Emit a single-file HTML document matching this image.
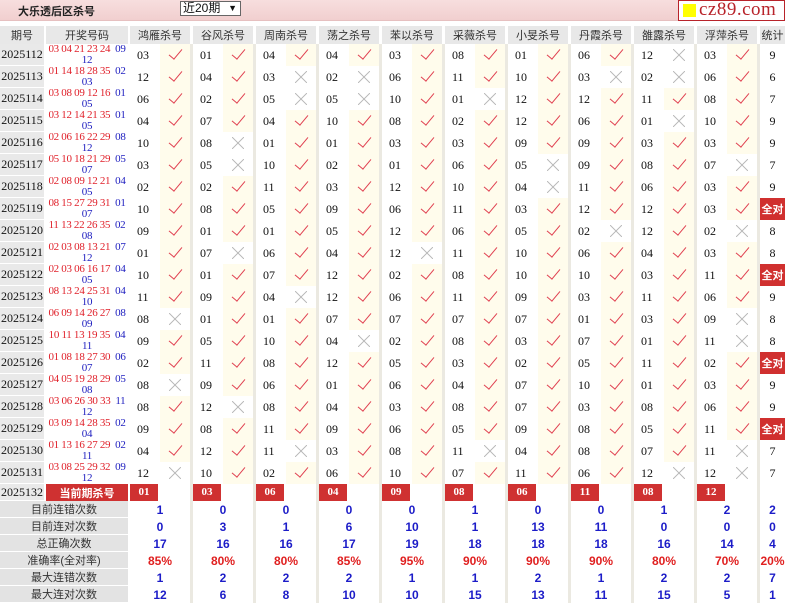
<!DOCTYPE html>
<html><head><meta charset="utf-8">
<style>
*{margin:0;padding:0}
body{width:785px;height:600px;overflow:hidden;background:#fff;font-family:"Liberation Serif","Noto Serif CJK SC",serif;font-size:12px;color:#111;position:relative}
.top{position:absolute;left:0;top:0;width:785px;height:20px;background:linear-gradient(180deg,#f7dede,#f1cfcf);border-bottom:1px solid #e6c0c0}
.title{position:absolute;left:18px;top:3px;font:bold 11px "Liberation Sans","Noto Sans CJK SC",sans-serif;color:#222}
.sel{position:absolute;left:180px;top:1px;width:57px;height:13px;border:1px solid #666;background:#fff;font:12px "Liberation Sans","Noto Sans CJK SC",sans-serif;line-height:13px;padding-left:2px;box-sizing:content-box}
.sel span{position:absolute;right:3px;top:0;font-size:9px}
.logo{position:absolute;left:678px;top:0;width:105px;height:19px;border:1px solid #b8232a;background:#fff}
.logo i{position:absolute;left:4px;top:3px;width:13px;height:13px;background:#ffff00}
.logo b{position:absolute;left:20px;top:-2px;font:19px "Liberation Serif",serif;color:#b8232a;letter-spacing:0.5px}
table{position:absolute;left:0;top:26px;border-collapse:separate;border-spacing:0;table-layout:fixed;width:785px}
td{box-sizing:border-box;padding:0;height:22px;text-align:center;vertical-align:middle;overflow:hidden;white-space:nowrap}
tr.h td{height:18px;background:#e8e8e8;font:11px "Liberation Sans","Noto Sans CJK SC",sans-serif;color:#333;border-right:2px solid #fff}
tr.h td.g{border-right:3px solid #fff}
td.q{background:#e9e9e9;border-right:2px solid #fff;border-bottom:1px solid #fff;font-size:12px}
td.k{border-right:2px solid #fff;line-height:11px;font-size:11px;letter-spacing:-0.3px;color:#2020c0;vertical-align:top;padding-top:0}
td.k span{color:#e0202a}
td.n{text-align:left;padding-left:7px}
td.v,td.x{border-right:3px solid #ebe9e1}
td.v{background:#fffcec}
td.v:after{content:"";display:inline-block;width:6px;height:12px;border:solid #e04050;border-width:0 1.6px 1.6px 0;transform:rotate(40deg);margin-top:-5px}
td.x{background:linear-gradient(45deg,transparent 46%,#bdbdbd 46%,#bdbdbd 54%,transparent 54%) center/12px 12px no-repeat,linear-gradient(-45deg,transparent 46%,#bdbdbd 46%,#bdbdbd 54%,transparent 54%) center/12px 12px no-repeat,#fff}
td.t{font-size:12px}
td.a{background:#d0302f;color:#fff;font:bold 11px "Liberation Sans","Noto Sans CJK SC",sans-serif}
tr.c td{height:17px}
tr.c td.cur{background:#cf3131;color:#fff;font:bold 11px "Liberation Sans","Noto Sans CJK SC",sans-serif;border-right:2px solid #fff}
tr.c td.n{padding:0}
tr.c td.n b{display:block;width:28px;height:17px;line-height:17px;background:#cf3131;color:#fff;font-size:11px;text-align:center}
tr.c td.e{border-right:3px solid #ebe9e1}
tr.s td{height:17px;font:bold 12px "Liberation Sans",sans-serif;color:#1c1cc8;border-right:3px solid #ebe9e1}
tr.s td.l{background:#e3e3e3;font:11px "Liberation Sans","Noto Sans CJK SC",sans-serif;color:#333;border-right:2px solid #fff;border-bottom:1px solid #fff}
tr.s td.z{border-right:0}
tr.p td{color:#e02020}
tr.p td.l{color:#333}
</style></head><body>
<div class="top"><div class="title">大乐透后区杀号</div><div class="sel">近20期<span>▼</span></div><div class="logo"><i></i><b>cz89.com</b></div></div>
<table>
<colgroup><col style="width:46px"><col style="width:84px">
<col style="width:30px"><col style="width:33px"><col style="width:30px"><col style="width:33px"><col style="width:30px"><col style="width:33px"><col style="width:30px"><col style="width:33px"><col style="width:30px"><col style="width:33px"><col style="width:30px"><col style="width:33px"><col style="width:30px"><col style="width:33px"><col style="width:30px"><col style="width:33px"><col style="width:30px"><col style="width:33px"><col style="width:30px"><col style="width:33px">
<col style="width:25px"></colgroup>
<tr class="h"><td>期号</td><td>开奖号码</td><td colspan="2" class="g">鸿雁杀号</td><td colspan="2" class="g">谷风杀号</td><td colspan="2" class="g">周南杀号</td><td colspan="2" class="g">荡之杀号</td><td colspan="2" class="g">苯以杀号</td><td colspan="2" class="g">采薇杀号</td><td colspan="2" class="g">小旻杀号</td><td colspan="2" class="g">丹霞杀号</td><td colspan="2" class="g">雒露杀号</td><td colspan="2" class="g">浮萍杀号</td><td style="border:0">统计</td></tr>
<tr><td class="q">2025112</td><td class="k"><span>03 04 21 23 24</span> &nbsp;09<br>12</td><td class="n">03</td><td class="v"></td><td class="n">01</td><td class="v"></td><td class="n">04</td><td class="v"></td><td class="n">04</td><td class="v"></td><td class="n">03</td><td class="v"></td><td class="n">08</td><td class="v"></td><td class="n">01</td><td class="v"></td><td class="n">06</td><td class="v"></td><td class="n">12</td><td class="x"></td><td class="n">03</td><td class="v"></td><td class="t">9</td></tr>
<tr><td class="q">2025113</td><td class="k"><span>01 14 18 28 35</span> &nbsp;02<br>03</td><td class="n">12</td><td class="v"></td><td class="n">04</td><td class="v"></td><td class="n">03</td><td class="x"></td><td class="n">02</td><td class="x"></td><td class="n">06</td><td class="v"></td><td class="n">11</td><td class="v"></td><td class="n">10</td><td class="v"></td><td class="n">03</td><td class="x"></td><td class="n">02</td><td class="x"></td><td class="n">06</td><td class="v"></td><td class="t">6</td></tr>
<tr><td class="q">2025114</td><td class="k"><span>03 08 09 12 16</span> &nbsp;01<br>05</td><td class="n">06</td><td class="v"></td><td class="n">02</td><td class="v"></td><td class="n">05</td><td class="x"></td><td class="n">05</td><td class="x"></td><td class="n">10</td><td class="v"></td><td class="n">01</td><td class="x"></td><td class="n">12</td><td class="v"></td><td class="n">12</td><td class="v"></td><td class="n">11</td><td class="v"></td><td class="n">08</td><td class="v"></td><td class="t">7</td></tr>
<tr><td class="q">2025115</td><td class="k"><span>03 12 14 21 35</span> &nbsp;01<br>05</td><td class="n">04</td><td class="v"></td><td class="n">07</td><td class="v"></td><td class="n">04</td><td class="v"></td><td class="n">10</td><td class="v"></td><td class="n">08</td><td class="v"></td><td class="n">02</td><td class="v"></td><td class="n">12</td><td class="v"></td><td class="n">06</td><td class="v"></td><td class="n">01</td><td class="x"></td><td class="n">10</td><td class="v"></td><td class="t">9</td></tr>
<tr><td class="q">2025116</td><td class="k"><span>02 06 16 22 29</span> &nbsp;08<br>12</td><td class="n">10</td><td class="v"></td><td class="n">08</td><td class="x"></td><td class="n">01</td><td class="v"></td><td class="n">01</td><td class="v"></td><td class="n">03</td><td class="v"></td><td class="n">03</td><td class="v"></td><td class="n">09</td><td class="v"></td><td class="n">09</td><td class="v"></td><td class="n">03</td><td class="v"></td><td class="n">03</td><td class="v"></td><td class="t">9</td></tr>
<tr><td class="q">2025117</td><td class="k"><span>05 10 18 21 29</span> &nbsp;05<br>07</td><td class="n">03</td><td class="v"></td><td class="n">05</td><td class="x"></td><td class="n">10</td><td class="v"></td><td class="n">02</td><td class="v"></td><td class="n">01</td><td class="v"></td><td class="n">06</td><td class="v"></td><td class="n">05</td><td class="x"></td><td class="n">09</td><td class="v"></td><td class="n">08</td><td class="v"></td><td class="n">07</td><td class="x"></td><td class="t">7</td></tr>
<tr><td class="q">2025118</td><td class="k"><span>02 08 09 12 21</span> &nbsp;04<br>05</td><td class="n">02</td><td class="v"></td><td class="n">02</td><td class="v"></td><td class="n">11</td><td class="v"></td><td class="n">03</td><td class="v"></td><td class="n">12</td><td class="v"></td><td class="n">10</td><td class="v"></td><td class="n">04</td><td class="x"></td><td class="n">11</td><td class="v"></td><td class="n">06</td><td class="v"></td><td class="n">03</td><td class="v"></td><td class="t">9</td></tr>
<tr><td class="q">2025119</td><td class="k"><span>08 15 27 29 31</span> &nbsp;01<br>07</td><td class="n">10</td><td class="v"></td><td class="n">08</td><td class="v"></td><td class="n">05</td><td class="v"></td><td class="n">09</td><td class="v"></td><td class="n">06</td><td class="v"></td><td class="n">11</td><td class="v"></td><td class="n">03</td><td class="v"></td><td class="n">12</td><td class="v"></td><td class="n">12</td><td class="v"></td><td class="n">03</td><td class="v"></td><td class="a">全对</td></tr>
<tr><td class="q">2025120</td><td class="k"><span>11 13 22 26 35</span> &nbsp;02<br>08</td><td class="n">09</td><td class="v"></td><td class="n">01</td><td class="v"></td><td class="n">01</td><td class="v"></td><td class="n">05</td><td class="v"></td><td class="n">12</td><td class="v"></td><td class="n">06</td><td class="v"></td><td class="n">05</td><td class="v"></td><td class="n">02</td><td class="x"></td><td class="n">12</td><td class="v"></td><td class="n">02</td><td class="x"></td><td class="t">8</td></tr>
<tr><td class="q">2025121</td><td class="k"><span>02 03 08 13 21</span> &nbsp;07<br>12</td><td class="n">01</td><td class="v"></td><td class="n">07</td><td class="x"></td><td class="n">06</td><td class="v"></td><td class="n">04</td><td class="v"></td><td class="n">12</td><td class="x"></td><td class="n">11</td><td class="v"></td><td class="n">10</td><td class="v"></td><td class="n">06</td><td class="v"></td><td class="n">04</td><td class="v"></td><td class="n">03</td><td class="v"></td><td class="t">8</td></tr>
<tr><td class="q">2025122</td><td class="k"><span>02 03 06 16 17</span> &nbsp;04<br>05</td><td class="n">10</td><td class="v"></td><td class="n">01</td><td class="v"></td><td class="n">07</td><td class="v"></td><td class="n">12</td><td class="v"></td><td class="n">02</td><td class="v"></td><td class="n">08</td><td class="v"></td><td class="n">10</td><td class="v"></td><td class="n">10</td><td class="v"></td><td class="n">03</td><td class="v"></td><td class="n">11</td><td class="v"></td><td class="a">全对</td></tr>
<tr><td class="q">2025123</td><td class="k"><span>08 13 24 25 31</span> &nbsp;04<br>10</td><td class="n">11</td><td class="v"></td><td class="n">09</td><td class="v"></td><td class="n">04</td><td class="x"></td><td class="n">12</td><td class="v"></td><td class="n">06</td><td class="v"></td><td class="n">11</td><td class="v"></td><td class="n">09</td><td class="v"></td><td class="n">03</td><td class="v"></td><td class="n">11</td><td class="v"></td><td class="n">06</td><td class="v"></td><td class="t">9</td></tr>
<tr><td class="q">2025124</td><td class="k"><span>06 09 14 26 27</span> &nbsp;08<br>09</td><td class="n">08</td><td class="x"></td><td class="n">01</td><td class="v"></td><td class="n">01</td><td class="v"></td><td class="n">07</td><td class="v"></td><td class="n">07</td><td class="v"></td><td class="n">07</td><td class="v"></td><td class="n">07</td><td class="v"></td><td class="n">01</td><td class="v"></td><td class="n">03</td><td class="v"></td><td class="n">09</td><td class="x"></td><td class="t">8</td></tr>
<tr><td class="q">2025125</td><td class="k"><span>10 11 13 19 35</span> &nbsp;04<br>11</td><td class="n">09</td><td class="v"></td><td class="n">05</td><td class="v"></td><td class="n">10</td><td class="v"></td><td class="n">04</td><td class="x"></td><td class="n">02</td><td class="v"></td><td class="n">08</td><td class="v"></td><td class="n">03</td><td class="v"></td><td class="n">07</td><td class="v"></td><td class="n">01</td><td class="v"></td><td class="n">11</td><td class="x"></td><td class="t">8</td></tr>
<tr><td class="q">2025126</td><td class="k"><span>01 08 18 27 30</span> &nbsp;06<br>07</td><td class="n">02</td><td class="v"></td><td class="n">11</td><td class="v"></td><td class="n">08</td><td class="v"></td><td class="n">12</td><td class="v"></td><td class="n">05</td><td class="v"></td><td class="n">03</td><td class="v"></td><td class="n">02</td><td class="v"></td><td class="n">05</td><td class="v"></td><td class="n">11</td><td class="v"></td><td class="n">02</td><td class="v"></td><td class="a">全对</td></tr>
<tr><td class="q">2025127</td><td class="k"><span>04 05 19 28 29</span> &nbsp;05<br>08</td><td class="n">08</td><td class="x"></td><td class="n">09</td><td class="v"></td><td class="n">06</td><td class="v"></td><td class="n">01</td><td class="v"></td><td class="n">06</td><td class="v"></td><td class="n">04</td><td class="v"></td><td class="n">07</td><td class="v"></td><td class="n">10</td><td class="v"></td><td class="n">01</td><td class="v"></td><td class="n">03</td><td class="v"></td><td class="t">9</td></tr>
<tr><td class="q">2025128</td><td class="k"><span>03 06 26 30 33</span> &nbsp;11<br>12</td><td class="n">08</td><td class="v"></td><td class="n">12</td><td class="x"></td><td class="n">08</td><td class="v"></td><td class="n">04</td><td class="v"></td><td class="n">03</td><td class="v"></td><td class="n">08</td><td class="v"></td><td class="n">07</td><td class="v"></td><td class="n">03</td><td class="v"></td><td class="n">08</td><td class="v"></td><td class="n">06</td><td class="v"></td><td class="t">9</td></tr>
<tr><td class="q">2025129</td><td class="k"><span>03 09 14 28 35</span> &nbsp;02<br>04</td><td class="n">09</td><td class="v"></td><td class="n">08</td><td class="v"></td><td class="n">11</td><td class="v"></td><td class="n">09</td><td class="v"></td><td class="n">06</td><td class="v"></td><td class="n">05</td><td class="v"></td><td class="n">09</td><td class="v"></td><td class="n">08</td><td class="v"></td><td class="n">05</td><td class="v"></td><td class="n">11</td><td class="v"></td><td class="a">全对</td></tr>
<tr><td class="q">2025130</td><td class="k"><span>01 13 16 27 29</span> &nbsp;02<br>11</td><td class="n">04</td><td class="v"></td><td class="n">12</td><td class="v"></td><td class="n">11</td><td class="x"></td><td class="n">03</td><td class="v"></td><td class="n">08</td><td class="v"></td><td class="n">11</td><td class="x"></td><td class="n">04</td><td class="v"></td><td class="n">08</td><td class="v"></td><td class="n">07</td><td class="v"></td><td class="n">11</td><td class="x"></td><td class="t">7</td></tr>
<tr><td class="q">2025131</td><td class="k"><span>03 08 25 29 32</span> &nbsp;09<br>12</td><td class="n">12</td><td class="x"></td><td class="n">10</td><td class="v"></td><td class="n">02</td><td class="v"></td><td class="n">06</td><td class="v"></td><td class="n">10</td><td class="v"></td><td class="n">07</td><td class="v"></td><td class="n">11</td><td class="v"></td><td class="n">06</td><td class="v"></td><td class="n">12</td><td class="x"></td><td class="n">12</td><td class="x"></td><td class="t">7</td></tr>
<tr class="c"><td class="q">2025132</td><td class="cur">当前期杀号</td><td class="n"><b>01</b></td><td class="e"></td><td class="n"><b>03</b></td><td class="e"></td><td class="n"><b>06</b></td><td class="e"></td><td class="n"><b>04</b></td><td class="e"></td><td class="n"><b>09</b></td><td class="e"></td><td class="n"><b>08</b></td><td class="e"></td><td class="n"><b>06</b></td><td class="e"></td><td class="n"><b>11</b></td><td class="e"></td><td class="n"><b>08</b></td><td class="e"></td><td class="n"><b>12</b></td><td class="e"></td><td></td></tr>
<tr class="s"><td class="l" colspan="2">目前连错次数</td><td colspan="2">1</td><td colspan="2">0</td><td colspan="2">0</td><td colspan="2">0</td><td colspan="2">0</td><td colspan="2">1</td><td colspan="2">0</td><td colspan="2">0</td><td colspan="2">1</td><td colspan="2">2</td><td class="z">2</td></tr>
<tr class="s"><td class="l" colspan="2">目前连对次数</td><td colspan="2">0</td><td colspan="2">3</td><td colspan="2">1</td><td colspan="2">6</td><td colspan="2">10</td><td colspan="2">1</td><td colspan="2">13</td><td colspan="2">11</td><td colspan="2">0</td><td colspan="2">0</td><td class="z">0</td></tr>
<tr class="s"><td class="l" colspan="2">总正确次数</td><td colspan="2">17</td><td colspan="2">16</td><td colspan="2">16</td><td colspan="2">17</td><td colspan="2">19</td><td colspan="2">18</td><td colspan="2">18</td><td colspan="2">18</td><td colspan="2">16</td><td colspan="2">14</td><td class="z">4</td></tr>
<tr class="s p"><td class="l" colspan="2">准确率(全对率)</td><td colspan="2">85%</td><td colspan="2">80%</td><td colspan="2">80%</td><td colspan="2">85%</td><td colspan="2">95%</td><td colspan="2">90%</td><td colspan="2">90%</td><td colspan="2">90%</td><td colspan="2">80%</td><td colspan="2">70%</td><td class="z">20%</td></tr>
<tr class="s"><td class="l" colspan="2">最大连错次数</td><td colspan="2">1</td><td colspan="2">2</td><td colspan="2">2</td><td colspan="2">2</td><td colspan="2">1</td><td colspan="2">1</td><td colspan="2">2</td><td colspan="2">1</td><td colspan="2">2</td><td colspan="2">2</td><td class="z">7</td></tr>
<tr class="s"><td class="l" colspan="2">最大连对次数</td><td colspan="2">12</td><td colspan="2">6</td><td colspan="2">8</td><td colspan="2">10</td><td colspan="2">10</td><td colspan="2">15</td><td colspan="2">13</td><td colspan="2">11</td><td colspan="2">15</td><td colspan="2">5</td><td class="z">1</td></tr>
</table>
</body></html>
